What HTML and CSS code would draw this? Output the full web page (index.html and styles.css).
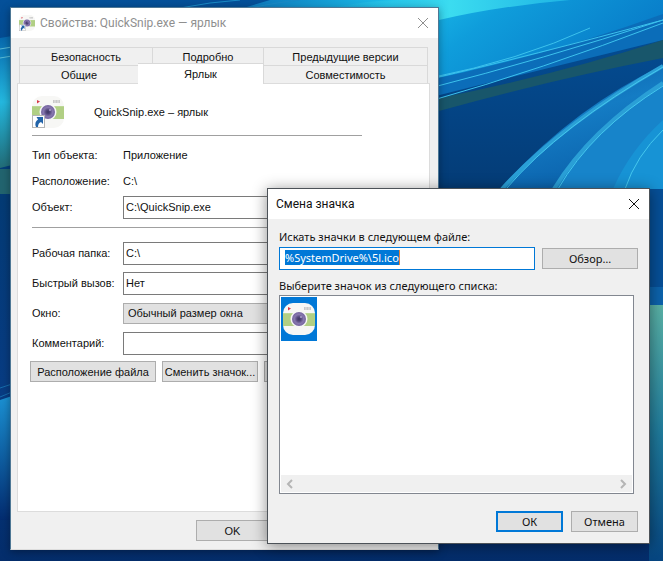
FILE: index.html
```html
<!DOCTYPE html>
<html lang="ru">
<head>
<meta charset="utf-8">
<title>Свойства: QuickSnip.exe — ярлык</title>
<link rel="stylesheet" href="styles.css">
</head>
<body>
<svg class="symbols" aria-hidden="true">
  <defs>
    <radialGradient id="lens">
      <stop offset="0" stop-color="#3c3560"/>
      <stop offset="0.3" stop-color="#54487c"/>
      <stop offset="0.65" stop-color="#8777ae"/>
      <stop offset="1" stop-color="#7564a0"/>
    </radialGradient>
    <symbol id="camera" viewBox="0 0 32 32">
      <rect width="32" height="32" rx="10" fill="#f7f7f5"/>
      <rect y="10" width="32" height="13" fill="#b1cf84"/>
      <rect y="10" width="32" height="1" fill="#bdd897"/>
      <path d="M5 4l3 1.500-3 2z" fill="#d93a48"/>
      <rect x="21" y="4" width="7" height="3" fill="#c9c9c9"/>
      <path d="M23 4v3M26 4v3" stroke="#e4e4e4"/>
      <circle cx="16" cy="16" r="8.500" fill="#f7f7f7"/>
      <circle cx="16" cy="16" r="7" fill="url(#lens)"/>
      <circle cx="18" cy="14" r="1" fill="#a99cc8"/>
    </symbol>
    <symbol id="shortcut" viewBox="0 0 32 32">
      <use href="#camera"/>
      <rect x="0.500" y="19.500" width="12" height="12" fill="#fff" stroke="#b5b5b5"/>
      <path d="M4.500 21H11v7l-2-2q-3 1-3 5H4Q2 26 6 23.500z" fill="#2263a8"/>
    </symbol>
  </defs>
</svg>

<svg class="wallpaper" viewBox="0 0 663 561" preserveAspectRatio="none" aria-hidden="true">
  <defs>
    <linearGradient id="base" x2="0" y2="1">
      <stop offset="0" stop-color="#045099"/>
      <stop offset="0.35" stop-color="#043b75"/>
      <stop offset="0.7" stop-color="#083c83"/>
      <stop offset="1" stop-color="#042d6b"/>
    </linearGradient>
    <linearGradient id="sky" x2="1" y2="0.300">
      <stop offset="0" stop-color="#0b6db5"/>
      <stop offset="0.35" stop-color="#1cc0ec"/>
      <stop offset="0.6" stop-color="#0f9ddb"/>
      <stop offset="1" stop-color="#087bc8"/>
    </linearGradient>
    <linearGradient id="glow">
      <stop offset="0" stop-color="#2cc0e4" stop-opacity="0"/>
      <stop offset="0.5" stop-color="#3bdcf0"/>
      <stop offset="1" stop-color="#1fb4e4"/>
    </linearGradient>
    <linearGradient id="wave" x2="0.400" y2="1">
      <stop offset="0" stop-color="#0b5ba5"/>
      <stop offset="0.5" stop-color="#147cc4"/>
      <stop offset="1" stop-color="#0b62ac"/>
    </linearGradient>
    <linearGradient id="edge" x2="0" y2="1">
      <stop offset="0" stop-color="#59b1a6"/>
      <stop offset="0.5" stop-color="#1f7a9b"/>
      <stop offset="1" stop-color="#064580"/>
    </linearGradient>
    <linearGradient id="left" x2="0" y2="1">
      <stop offset="0" stop-color="#0768ad"/>
      <stop offset="0.5" stop-color="#24b8df"/>
      <stop offset="1" stop-color="#226c77"/>
    </linearGradient>
    <linearGradient id="leftlow" x2="0" y2="1">
      <stop offset="0" stop-color="#1b91d3"/>
      <stop offset="1" stop-color="#032c70"/>
    </linearGradient>
  </defs>
  <rect width="663" height="561" fill="url(#base)"/>
  <path d="M270 0H663V30Q550 45 420 100V12H230z" fill="url(#sky)"/>
  <path d="M330 8Q370 0 400 0H570Q500 6 439 20L400 24z" fill="url(#glow)"/>
  <path d="M180 8Q210 2 240 0M250 8Q280 2 300 0" fill="none" stroke="#1a8ac6"/>
  <path d="M420 82Q550 55 663 14V40Q540 70 420 100z" fill="#0b6db9"/>
  <path d="M439 98Q560 74 663 40V58Q550 80 439 111z" fill="#18566b"/>
  <path d="M663 65Q570 110 500 189H663z" fill="url(#wave)"/>
  <path d="M663 86Q590 128 553 189H663z" fill="#1784ca"/>
  <path d="M663 120Q630 150 613 189H663z" fill="#1793d5"/>
  <path d="M663 66Q560 125 502 189M663 83Q590 130 554 189" fill="none" stroke="#2a9fd6" stroke-width="4"/>
  <path d="M663 67Q560 126 506 189M663 86Q592 130 558 189M663 130Q636 156 625 189" fill="none" stroke="#45c8ee"/>
  <path d="M430 78Q520 60 590 28M430 88Q540 60 663 20M430 79Q530 56 663 20M430 101Q540 70 663 23" fill="none" stroke="#3cc2ed"/>
  <path d="M649 189H663V287H649z" fill="#064f97"/>
  <path d="M649 287H663V305H649z" fill="#0c63ac"/>
  <path d="M649 305H663V561H649z" fill="url(#edge)"/>
  <path d="M0 38L12 36V165L0 168z" fill="url(#left)"/>
  <path d="M0 49L12 47M0 58L12 56" stroke="#5bbbd7"/>
  <path d="M0 169H12V194H0z" fill="#22646f"/>
  <path d="M0 400L12 396V520H0z" fill="url(#leftlow)"/>
  <path d="M0 388L12 384M0 397L12 392" stroke="#176cac"/>
</svg>

<main class="desktop">
  <section class="window properties" aria-label="Свойства">
    <header class="titlebar inactive">
      <svg class="icon-small" aria-hidden="true"><use href="#shortcut"/></svg>
      <h1 class="title">Свойства: QuickSnip.exe — ярлык</h1>
      <button class="close" aria-label="Закрыть"><svg viewBox="0 0 12 12"><path d="M1 1l10 10M11 1L1 11"/></svg></button>
    </header>
    <div class="sheet">
      <div class="tabs" role="tablist">
        <div class="tabrow back">
          <button class="tab" role="tab">Безопасность</button>
          <button class="tab" role="tab">Подробно</button>
          <button class="tab" role="tab">Предыдущие версии</button>
        </div>
        <div class="tabrow">
          <button class="tab" role="tab">Общие</button>
          <button class="tab active" role="tab" aria-selected="true">Ярлык</button>
          <button class="tab" role="tab">Совместимость</button>
        </div>
      </div>
      <form class="panel">
        <div class="heading">
          <svg class="icon-large" aria-hidden="true"><use href="#shortcut"/></svg>
          <span>QuickSnip.exe – ярлык</span>
        </div>
        <hr class="rule">
        <div class="row"><span>Тип объекта:</span><span>Приложение</span></div>
        <div class="row"><span>Расположение:</span><span>C:\</span></div>
        <div class="row"><label for="target">Объект:</label><input class="field" id="target" value="C:\QuickSnip.exe"></div>
        <hr class="rule">
        <div class="options">
          <div class="row"><label for="folder">Рабочая папка:</label><input class="field" id="folder" value="C:\"></div>
          <div class="row"><label for="hotkey">Быстрый вызов:</label><input class="field" id="hotkey" value="Нет"></div>
          <div class="row"><label for="mode">Окно:</label><select class="field" id="mode"><option>Обычный размер окна</option></select></div>
          <div class="row"><label for="comment">Комментарий:</label><input class="field" id="comment"></div>
        </div>
        <div class="actions">
          <button class="button wide" type="button">Расположение файла</button>
          <button class="button" type="button">Сменить значок...</button>
          <button class="button" type="button">Дополнительно...</button>
        </div>
      </form>
    </div>
    <footer class="footer">
      <button class="button">OK</button>
      <button class="button">Отмена</button>
      <button class="button">Применить</button>
    </footer>
  </section>

  <section class="window dialog" aria-label="Смена значка">
    <header class="titlebar">
      <h2 class="title">Смена значка</h2>
      <button class="close" aria-label="Закрыть"><svg viewBox="0 0 12 12"><path d="M1 1l10 10M11 1L1 11"/></svg></button>
    </header>
    <form class="chooser">
      <label for="path">Искать значки в следующем файле:</label>
      <div class="pathrow">
        <div class="pathbox"><input class="path" id="path" value="%SystemDrive%\5l.ico"></div>
        <button class="button" type="button">Обзор…</button>
      </div>
      <span id="listlabel">Выберите значок из следующего списка:</span>
      <div class="list" role="listbox" aria-labelledby="listlabel">
        <div class="item" role="option" aria-selected="true" aria-label="Камера"><svg class="icon-large" aria-hidden="true"><use href="#camera"/></svg></div>
        <div class="scrollbar">
          <svg viewBox="0 0 8 10"><path d="M6 1L2 5l4 4"/></svg>
          <svg viewBox="0 0 8 10"><path d="M2 1l4 4-4 4"/></svg>
        </div>
      </div>
      <div class="confirm">
        <button class="button default" type="button">ОК</button>
        <button class="button" type="button">Отмена</button>
      </div>
    </form>
  </section>
</main>
</body>
</html>
```
FILE: styles.css
```css
* { box-sizing: border-box; }

body {
  margin: 0;
  min-height: 100vh;
  background: #043b75;
  color: #111;
  font: 11px/16px "Liberation Sans", Arial, sans-serif;
  overflow: hidden;
}

button, input, select {
  margin: 0;
  color: inherit;
  font: inherit;
  border-radius: 0;
}

.symbols { position: absolute; width: 0; height: 0; }
.wallpaper { position: absolute; inset: 0; width: 100%; height: 100%; }
.desktop { position: relative; min-height: 100vh; }

.window {
  position: absolute;
  display: flex;
  flex-direction: column;
  background: #f0f0f0;
}

.properties {
  left: 10px;
  top: 7px;
  width: 429px;
  border: 1px solid #4d7795;
  border-bottom-color: #ddd;
  box-shadow: 0 2px 8px rgba(0, 0, 0, 0.35);
}

.dialog {
  left: 267px;
  top: 188px;
  width: 383px;
  border: 1px solid #4c5258;
  box-shadow: 0 2px 14px rgba(0, 0, 0, 0.45);
  font-family: "Noto Sans", sans-serif;
}

.titlebar {
  display: flex;
  align-items: center;
  height: 30px;
  padding: 0 8px;
  background: #fff;
  font-family: Roboto, sans-serif;
}

.title { flex: 1; margin: 0; font-size: 12px; font-weight: 400; }
.inactive { color: #8f8f8f; }
.inactive .title { padding-left: 5px; }
.icon-small { width: 16px; height: 16px; }
.icon-large { display: block; width: 32px; height: 32px; }

.close { display: flex; padding: 1px; border: 0; background: none; }
.close svg { width: 12px; height: 12px; fill: none; stroke: currentColor; }

.sheet { padding: 9px 8px 0 6px; }
.tabs { margin: 0 2px; }
.tabrow { display: grid; grid-template-columns: 120px 125px 1fr; height: 18px; }
.tabrow.back { grid-template-columns: 134px 111px 1fr; }
.tab {
  padding: 0;
  border: 1px solid #d9d9d9;
  border-width: 1px 1px 0 0;
  background: #f0f0f0;
}
.tab:first-child { border-left-width: 1px; }
.tab.active { position: relative; margin: -2px 0 -1px -1px; background: #fff; }

.panel {
  height: 429px;
  padding: 12px 14px;
  border: 1px solid #dcdcdc;
  background: #fff;
}

.heading { display: flex; align-items: center; gap: 30px; }
.rule { width: 330px; height: 1px; margin: 7px 0 6px; border: 0; background: #a0a0a0; }
.row { display: grid; grid-template-columns: 91px 1fr; align-items: center; height: 26px; }
.options { margin-top: 10px; }
.options .row { height: 30px; }

.field {
  width: 100%;
  height: 23px;
  padding: 1px 2px;
  border: 1px solid #7a7a7a;
  background: #fff;
}
select.field { height: 21px; padding: 0; border-color: #adadad; background: #e1e1e1; }

.actions { display: flex; gap: 6px; margin: 3px 0 0 -2px; }
.button {
  min-width: 96px;
  height: 21px;
  padding: 0;
  border: 1px solid #adadad;
  background: #e1e1e1;
}
.actions .wide { min-width: 126px; }

.footer { display: flex; gap: 6px; padding: 8px 0 8px 185px; }
.footer .button { width: 73px; min-width: 73px; }

.chooser { display: flex; flex-direction: column; padding: 10px 11px 11px; }
.pathrow { display: flex; align-items: center; gap: 7px; margin: 2px 0 8px; }
.pathbox { flex: 1; height: 23px; padding: 2px 5px; border: 1px solid #0078d7; background: #fff; }
.path {
  display: block;
  height: 15px;
  padding: 0;
  border: 0;
  border-right: 1px solid #e8833a;
  background: #0078d7;
  color: #fff;
  field-sizing: content;
}

.list {
  display: flex;
  flex-direction: column;
  justify-content: space-between;
  width: 355px;
  height: 199px;
  margin-top: 1px;
  padding: 1px;
  border: 1px solid #828790;
  background: #fff;
}
.item { width: 36px; height: 44px; padding: 6px 2px; background: #0078d7; }
.scrollbar { display: flex; justify-content: space-between; align-items: center; height: 17px; padding: 0 5px; background: #f0f0f0; }
.scrollbar svg { width: 8px; height: 10px; fill: none; stroke: #b5b5b5; stroke-width: 2; }

.confirm { display: flex; justify-content: flex-end; gap: 8px; margin-top: 17px; }
.confirm .button { min-width: 67px; }
.button.default { border: 2px solid #0078d7; }
```
